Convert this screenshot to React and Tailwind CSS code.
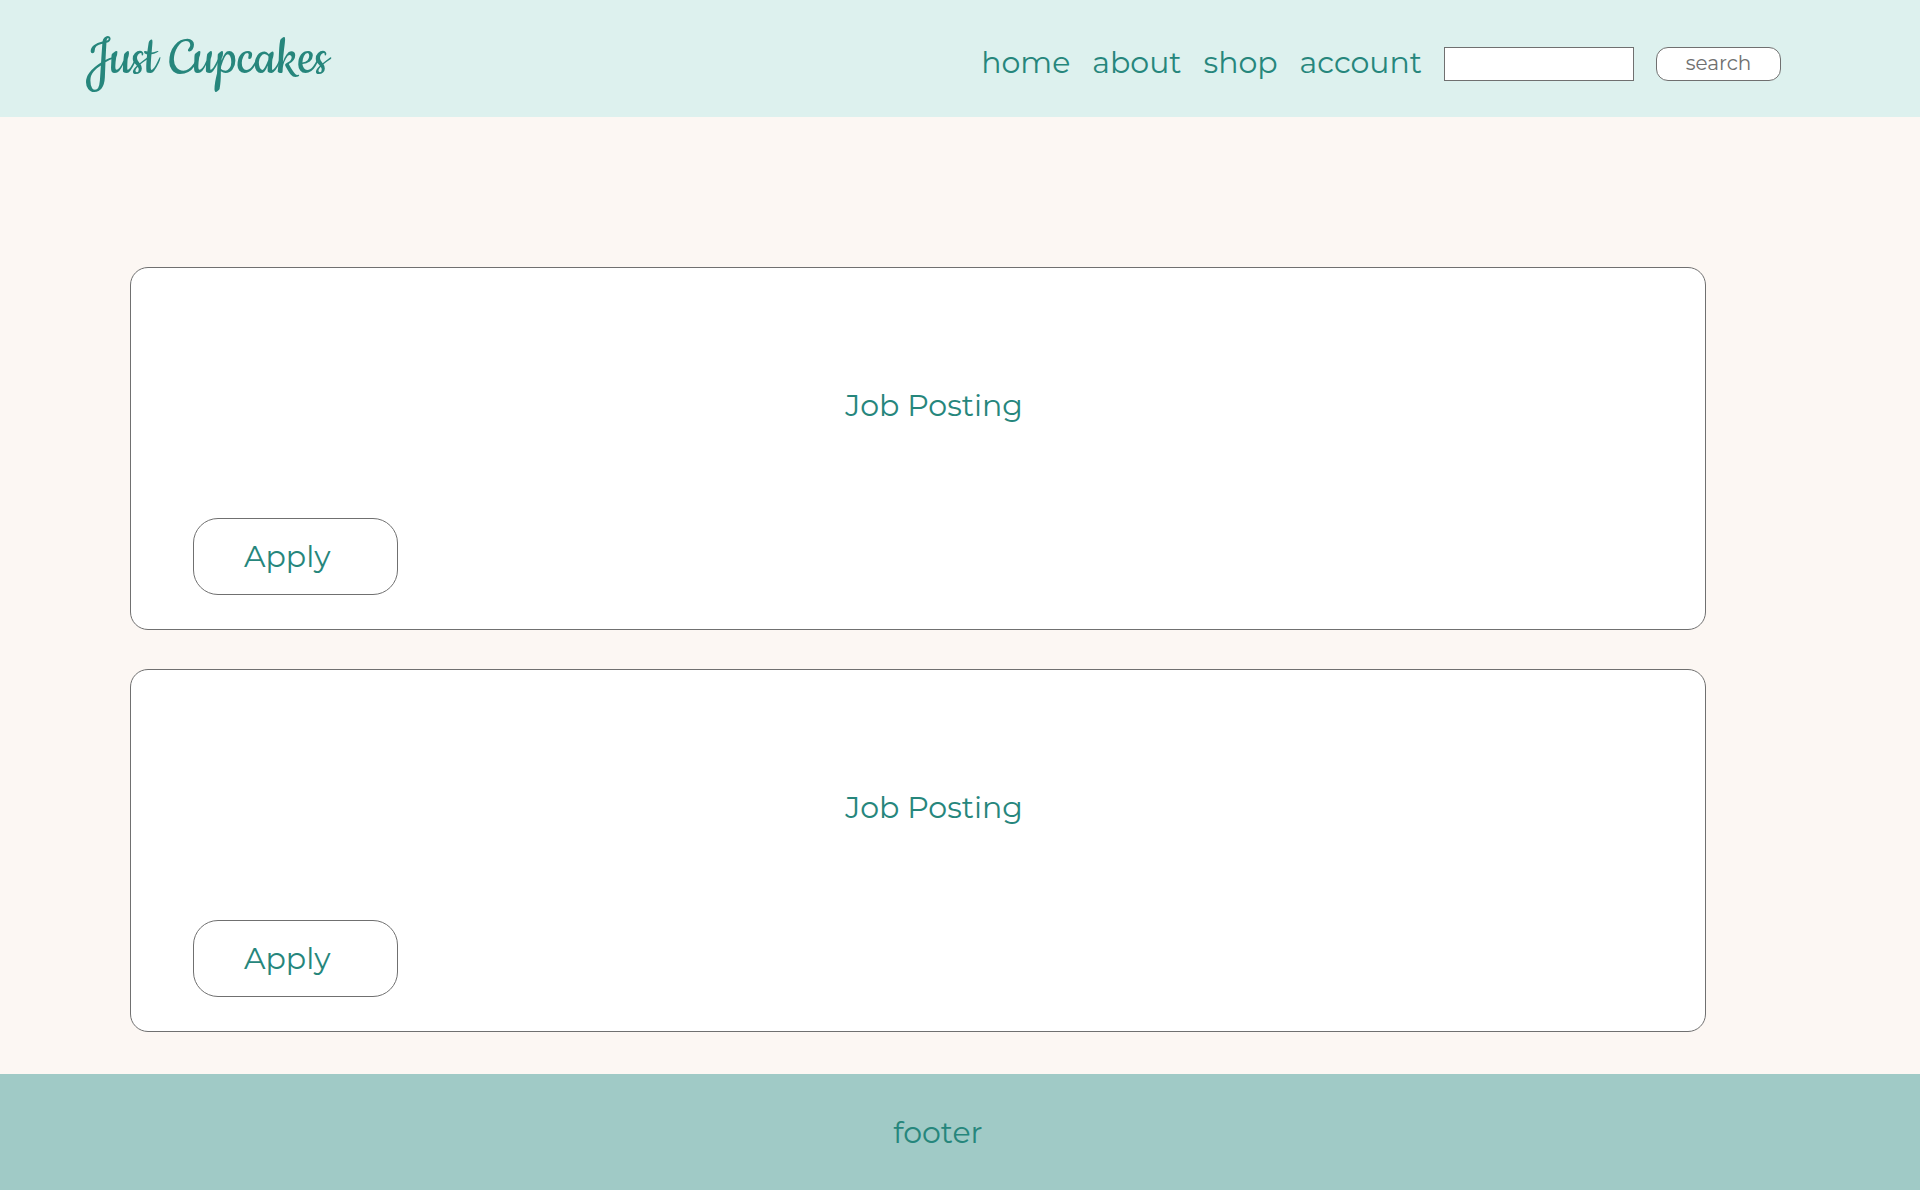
const links = ["home", "about", "shop", "account"];
const postings = ["Job Posting", "Job Posting"];

function Header() {
  return (
    <header className="flex h-[117px] items-center justify-between bg-[#ddf1ee] pr-[139px] pl-[86px]">
      <a
        href="#home"
        className="font-['Cookie',cursive] text-[60px] leading-[72px] whitespace-nowrap"
      >
        Just Cupcakes
      </a>
      <div className="flex items-center gap-[22px] pt-[11px]">
        <nav className="flex gap-[22px] pb-0.5 leading-[38px]">
          {links.map((link) => (
            <a key={link} href={"#" + link}>
              {link}
            </a>
          ))}
        </nav>
        <form className="flex gap-[22px]" onSubmit={(e) => e.preventDefault()}>
          <input
            type="text"
            aria-label="search"
            className="h-[34px] w-[190px] border border-[#707070] bg-white px-2 text-lg"
          />
          <button
            type="submit"
            className="h-[34px] w-[125px] rounded-xl border border-[#707070] bg-white pb-0.5 text-xl leading-6 text-[#707070]"
          >
            search
          </button>
        </form>
      </div>
    </header>
  );
}

function Posting({ title }) {
  return (
    <article className="flex h-[363px] flex-col justify-between rounded-[18px] border border-[#707070] bg-white pt-[118px] pb-[34px]">
      <h2 className="pl-8 text-center leading-10">{title}</h2>
      <button
        type="button"
        className="ml-[62px] h-[77px] w-[205px] rounded-[25px] border border-[#707070] bg-white pl-[50px] text-left"
      >
        Apply
      </button>
    </article>
  );
}

export default function App() {
  return (
    <div className="flex min-h-screen flex-col bg-[#fcf7f3] font-['Montserrat','Inter',sans-serif] text-[30px] text-[#26867c]">
      <Header />
      <main className="flex grow flex-col gap-[39px] pt-[150px] pr-[214px] pb-[42px] pl-[130px]">
        {postings.map((title, i) => (
          <Posting key={i} title={title} />
        ))}
      </main>
      <footer className="flex h-[116px] items-center justify-center bg-[#a0cac6] pt-0.5 pr-11 leading-10">
        footer
      </footer>
    </div>
  );
}
